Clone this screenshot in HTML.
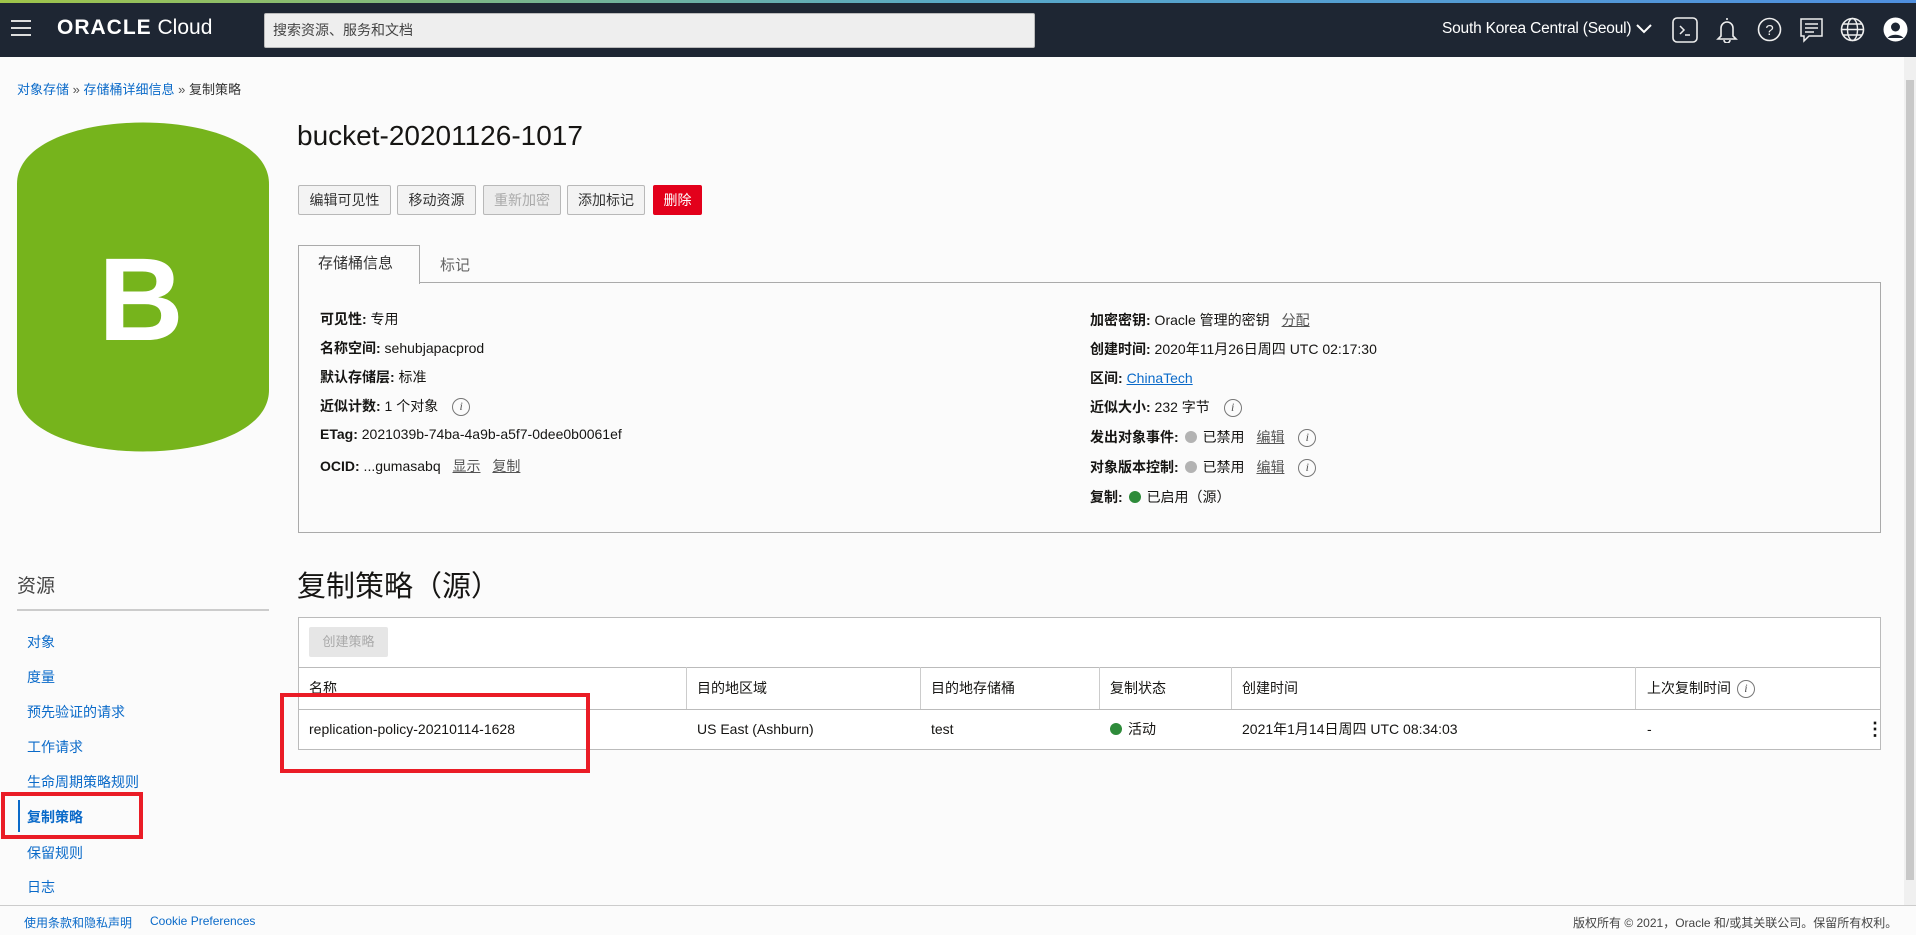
<!DOCTYPE html>
<html><head><meta charset="utf-8"><style>
*{box-sizing:border-box;margin:0;padding:0}
body{width:1916px;height:935px;overflow:hidden;background:#fbfbfb;font-family:"Liberation Sans","Noto Sans CJK SC",sans-serif;font-size:14px;color:#161513;position:relative}
.a{position:absolute;white-space:nowrap}
.top{position:absolute;left:0;top:0;width:1916px;height:3px;background:linear-gradient(90deg,#9fc449,#58a9c8,#4f8fdf)}
.hdr{position:absolute;left:0;top:3px;width:1916px;height:54px;background:#1e2633}
.btn{position:absolute;top:185px;height:30px;border:1px solid #b8b8b8;border-radius:2px;background:#f3f3f3;font-size:14px;line-height:28px;text-align:center;color:#333}
.lnk{color:#555;text-decoration:underline;margin-left:8px}
.info{display:inline-block;width:18px;height:18px;border:1.5px solid #777;border-radius:50%;font:italic 12px "Liberation Serif",serif;text-align:center;line-height:15px;color:#555;vertical-align:middle;margin-left:10px}
.dot{display:inline-block;width:12px;height:12px;border-radius:50%;background:#b3b3b3;vertical-align:-1px;margin:0 6px 0 2px}
b{font-weight:bold}
.side{position:absolute;left:27px;color:#0a6ac9;font-size:14px}
.th{position:absolute;top:667px;height:42px;line-height:42px;font-size:14px}
.td{position:absolute;top:709px;height:40px;line-height:40px;font-size:14px}
.vl{position:absolute;top:667px;height:42px;width:1px;background:#ccc}
</style></head><body>
<div class="top"></div>
<div class="hdr"></div>
<svg class="a" style="left:11px;top:19px" width="20" height="18"><path d="M0 2h20M0 9h20M0 16h20" stroke="#ddd" stroke-width="2"/></svg>
<div class="a" style="left:57px;top:16px;color:#fff;font-size:21px"><span style="font-weight:bold;letter-spacing:1px">ORACLE</span> <span>Cloud</span></div>
<div class="a" style="left:264px;top:13px;width:771px;height:35px;background:#eeeeee;border:1px solid #bbb;border-radius:2px;font-size:14px;color:#444;line-height:33px;padding-left:8px">搜索资源、服务和文档</div>
<div class="a" style="left:1442px;top:20px;color:#fff;font-size:15.5px;letter-spacing:-0.2px">South Korea Central (Seoul)</div>
<svg class="a" style="left:1636px;top:22px" width="16" height="12"><path d="M1 3l7 7 7-7" stroke="#fff" stroke-width="2" fill="none"/></svg>
<svg class="a" style="left:1672px;top:17px" width="26" height="26"><rect x="1" y="1" width="24" height="24" rx="4" stroke="#eee" stroke-width="1.6" fill="none"/><path d="M8 9l4 4-4 4M13 18h5" stroke="#eee" stroke-width="1.5" fill="none"/></svg>
<svg class="a" style="left:1716px;top:16px" width="22" height="27"><path d="M11 2v2M5 20V12a6 6 0 0112 0v8l3 3H2z M8 24a3 3 0 006 0" stroke="#eee" stroke-width="1.6" fill="none"/></svg>
<svg class="a" style="left:1757px;top:17px" width="25" height="25"><circle cx="12.5" cy="12.5" r="11" stroke="#eee" stroke-width="1.6" fill="none"/><text x="12.5" y="18" fill="#eee" font-size="15" text-anchor="middle" font-family="Liberation Sans">?</text></svg>
<svg class="a" style="left:1799px;top:17px" width="25" height="27"><path d="M2 2h21v17H10l-5 5v-5H2z M6 7h13M6 11h13M6 15h9" stroke="#eee" stroke-width="1.5" fill="none"/></svg>
<svg class="a" style="left:1840px;top:17px" width="25" height="25"><circle cx="12.5" cy="12.5" r="11" stroke="#eee" stroke-width="1.6" fill="none"/><ellipse cx="12.5" cy="12.5" rx="5" ry="11" stroke="#eee" stroke-width="1.4" fill="none"/><path d="M1.5 12.5h22M3 7h19M3 18h19" stroke="#eee" stroke-width="1.4"/></svg>
<svg class="a" style="left:1883px;top:17px" width="25" height="25"><circle cx="12.5" cy="12.5" r="12" fill="#fff"/><circle cx="12.5" cy="10" r="4.5" fill="#1e2633"/><path d="M4.5 21a9 6 0 0116 0" fill="#1e2633"/></svg>
<div class="a" style="left:1904px;top:57px;width:12px;height:848px;background:#f0f0f0"></div>
<div class="a" style="left:1906px;top:80px;width:8px;height:800px;background:#c8c8c8"></div>

<div class="a" style="left:17px;top:79px;font-size:13px;color:#0a6ac9">对象存储 <span style="color:#555">»</span> 存储桶详细信息 <span style="color:#555">»</span> <span style="color:#333">复制策略</span></div>

<svg class="a" style="left:17px;top:122px" width="252" height="330"><path d="M0 62 C0 -20 252 -20 252 62 V268 C252 350 0 350 0 268Z" fill="#76b41c"/><text x="124" y="218" text-anchor="middle" font-family="Liberation Sans" font-weight="bold" font-size="118" fill="#fff">B</text></svg>

<div class="a" style="left:297px;top:120px;font-size:28px;color:#161513">bucket-20201126-1017</div>
<div class="btn" style="left:298px;width:93px">编辑可见性</div>
<div class="btn" style="left:397px;width:79px">移动资源</div>
<div class="btn" style="left:483px;width:78px;color:#aaa;background:#ececec">重新加密</div>
<div class="btn" style="left:567px;width:78px">添加标记</div>
<div class="btn" style="left:653px;width:49px;background:#e3001b;border-color:#e3001b;color:#fff">删除</div>

<div class="a" style="left:298px;top:282px;width:1583px;height:251px;border:1px solid #aaa;background:#fbfbfb"></div>
<div class="a" style="left:298px;top:245px;width:122px;height:39px;border:1px solid #aaa;border-bottom:none;background:#fbfbfb;font-size:15px;line-height:36px;padding-left:19px;color:#333">存储桶信息</div>
<div class="a" style="left:440px;top:254px;font-size:15px;color:#666">标记</div>

<div class="a" style="left:320px;top:309px"><b>可见性:</b> 专用</div>
<div class="a" style="left:320px;top:338px"><b>名称空间:</b> sehubjapacprod</div>
<div class="a" style="left:320px;top:367px"><b>默认存储层:</b> 标准</div>
<div class="a" style="left:320px;top:396px"><b>近似计数:</b> 1 个对象 <span class="info">i</span></div>
<div class="a" style="left:320px;top:426px"><b>ETag:</b> 2021039b-74ba-4a9b-a5f7-0dee0b0061ef</div>
<div class="a" style="left:320px;top:456px"><b>OCID:</b> ...gumasabq <span class="lnk">显示</span> <span class="lnk">复制</span></div>

<div class="a" style="left:1090px;top:310px"><b>加密密钥:</b> Oracle 管理的密钥 <span class="lnk">分配</span></div>
<div class="a" style="left:1090px;top:339px"><b>创建时间:</b> 2020年11月26日周四 UTC 02:17:30</div>
<div class="a" style="left:1090px;top:368px"><b>区间:</b> <span style="color:#0a6ac9;text-decoration:underline">ChinaTech</span></div>
<div class="a" style="left:1090px;top:397px"><b>近似大小:</b> 232 字节 <span class="info">i</span></div>
<div class="a" style="left:1090px;top:427px"><b>发出对象事件:</b> <span class="dot"></span>已禁用 <span class="lnk">编辑</span> <span class="info">i</span></div>
<div class="a" style="left:1090px;top:457px"><b>对象版本控制:</b> <span class="dot"></span>已禁用 <span class="lnk">编辑</span> <span class="info">i</span></div>
<div class="a" style="left:1090px;top:487px"><b>复制:</b> <span class="dot" style="background:#2e8b3a"></span>已启用（源）</div>

<div class="a" style="left:17px;top:571px;font-size:19px;color:#444">资源</div>
<div class="a" style="left:17px;top:609px;width:252px;height:2px;background:#ccc"></div>
<div class="side" style="top:632px">对象</div>
<div class="side" style="top:667px">度量</div>
<div class="side" style="top:702px">预先验证的请求</div>
<div class="side" style="top:737px">工作请求</div>
<div class="side" style="top:772px">生命周期策略规则</div>
<div class="a" style="left:18px;top:800px;width:2px;height:32px;background:#0a6ac9"></div>
<div class="side" style="top:807px;font-weight:bold">复制策略</div>
<div class="side" style="top:843px">保留规则</div>
<div class="side" style="top:877px">日志</div>

<div class="a" style="left:297px;top:563px;font-size:29px;color:#161513">复制策略（源）</div>
<div class="a" style="left:298px;top:617px;width:1583px;height:133px;border:1px solid #bbb;background:#fff"></div>
<div class="a" style="left:309px;top:627px;width:79px;height:30px;background:#e6e6e6;border-radius:2px;color:#aaa;font-size:13px;line-height:30px;text-align:center">创建策略</div>
<div class="a" style="left:298px;top:667px;width:1583px;height:1px;background:#bbb"></div>
<div class="a" style="left:298px;top:709px;width:1583px;height:1px;background:#bbb"></div>
<div class="vl" style="left:686px"></div><div class="vl" style="left:920px"></div><div class="vl" style="left:1099px"></div><div class="vl" style="left:1231px"></div><div class="vl" style="left:1635px"></div>
<div class="th" style="left:309px">名称</div>
<div class="th" style="left:697px">目的地区域</div>
<div class="th" style="left:931px">目的地存储桶</div>
<div class="th" style="left:1110px">复制状态</div>
<div class="th" style="left:1242px">创建时间</div>
<div class="th" style="left:1647px">上次复制时间 <span class="info" style="margin-left:2px">i</span></div>
<div class="td" style="left:309px">replication-policy-20210114-1628</div>
<div class="td" style="left:697px">US East (Ashburn)</div>
<div class="td" style="left:931px">test</div>
<div class="td" style="left:1110px"><span class="dot" style="background:#2e8b3a;margin-left:0"></span>活动</div>
<div class="td" style="left:1242px">2021年1月14日周四 UTC 08:34:03</div>
<div class="td" style="left:1647px">-</div>
<div class="td" style="left:1866px;font-weight:bold;font-size:18px">⋮</div>

<div class="a" style="left:280px;top:693px;width:310px;height:80px;border:4px solid #ea1c26"></div>
<div class="a" style="left:1px;top:792px;width:142px;height:47px;border:4px solid #ea1c26"></div>

<div class="a" style="left:0;top:905px;width:1916px;height:30px;background:#fbfbfb;border-top:1px solid #ccc"></div>
<div class="a" style="left:24px;top:914px;font-size:12px;color:#0a6ac9">使用条款和隐私声明</div>
<div class="a" style="left:150px;top:914px;font-size:12px;color:#0a6ac9">Cookie Preferences</div>
<div class="a" style="left:1573px;top:914px;font-size:12px;color:#444">版权所有 © 2021，Oracle 和/或其关联公司。保留所有权利。</div>
</body></html>
